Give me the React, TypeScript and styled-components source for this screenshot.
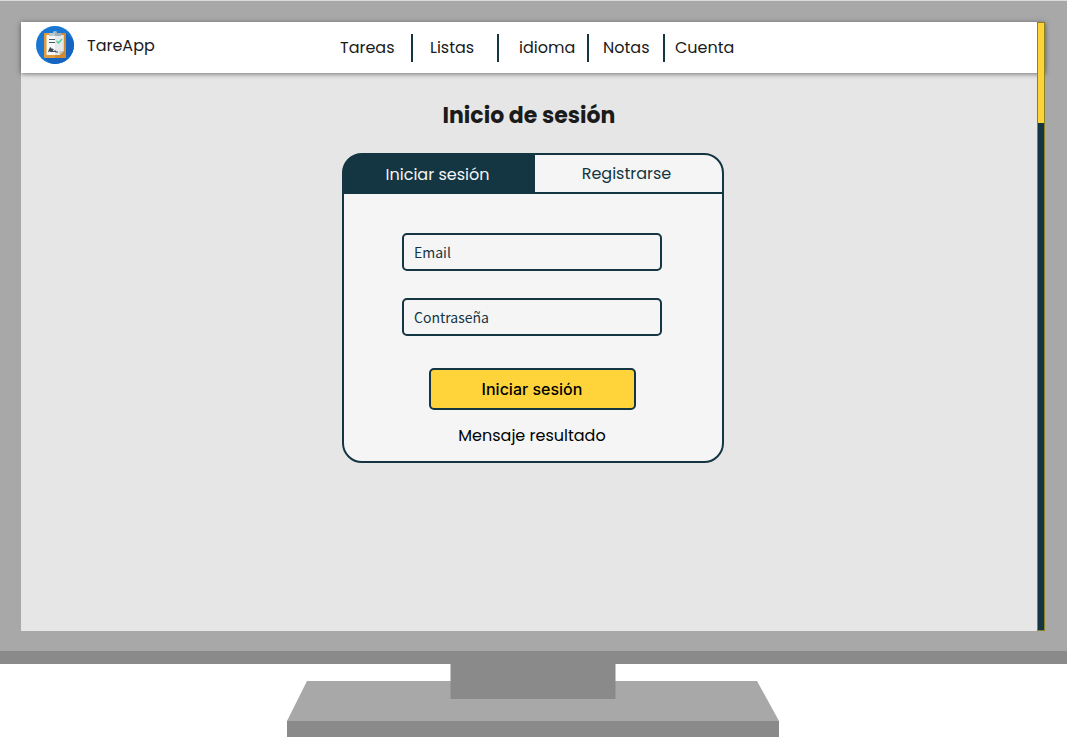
import React from 'react';
import styled, { createGlobalStyle } from 'styled-components';

const navy = '#143642';
const yellow = '#ffd43b';

const GlobalStyle = createGlobalStyle`
  *, *::before, *::after { box-sizing: border-box; }
  body {
    margin: 0;
    background: #fff;
    color: #1b1b1b;
    font-family: Poppins, Inter, sans-serif;
    font-size: 16px;
    line-height: 24px;
  }
  button, input { font: inherit; }
`;

const Page = styled.div`
  display: flex;
  flex-direction: column;
  min-height: 100vh;
`;

const Monitor = styled.div`
  display: flex;
  flex: 1;
  padding: 21px 22px 20px 21px;
  background: #a8a8a8;
  border-top: 1px solid #dcdcdc;
  border-bottom: 13px solid #8a8a8a;
`;

const Screen = styled.div`
  position: relative;
  display: flex;
  flex: 1;
  flex-direction: column;
  min-width: 0;
  background: #e6e6e6;
`;

const Header = styled.header`
  display: grid;
  grid-template-columns: 1fr auto 1fr;
  align-items: center;
  height: 51px;
  padding: 0 15px;
  background: #fff;
  box-shadow: 0 1px 5px rgba(0, 0, 0, 0.5);
`;

const Brand = styled.a`
  display: flex;
  align-items: center;
  gap: 13px;
  padding-bottom: 5px;
  color: inherit;
  text-decoration: none;
`;

const BrandName = styled.span`
  padding-top: 2px;
`;

const Nav = styled.nav`
  display: flex;
`;

const NavLink = styled.a<{ $width: number; $inset: number }>`
  width: ${({ $width }) => $width}px;
  padding: 2px 0 2px ${({ $inset }) => $inset}px;
  color: inherit;
  text-decoration: none;

  & + & {
    border-left: 2px solid ${navy};
  }
`;

const Scrollbar = styled.div`
  position: absolute;
  top: 0;
  right: 0;
  bottom: 0;
  width: 8px;
  background: ${navy};
  border: 1px solid #8c7f24;
`;

const Thumb = styled.div`
  height: 100px;
  background: ${yellow};
`;

const Main = styled.main`
  display: flex;
  flex-direction: column;
  align-items: center;
  padding: 27px 0 24px;
`;

const Title = styled.h1`
  margin: 0 0 21px;
  padding-right: 8px;
  font-size: 22px;
  font-weight: 700;
  line-height: 32px;
`;

const Card = styled.section`
  width: 382px;
  max-width: 100%;
  background: #f5f5f5;
  border: 2px solid ${navy};
  border-radius: 20px;
`;

const Tabs = styled.div`
  display: flex;
  border-bottom: 2px solid ${navy};
`;

const Tab = styled.button<{ $active?: boolean }>`
  flex: ${({ $active }) => ($active ? '0 0 191px' : '1')};
  height: 37px;
  padding: ${({ $active }) => ($active ? '2px 4px 0 0' : '0 4px 0 0')};
  border: 0;
  border-radius: ${({ $active }) => ($active ? '18px 0 0 0' : '0 18px 0 0')};
  background: ${({ $active }) => ($active ? navy : 'transparent')};
  box-shadow: ${({ $active }) => ($active ? `-1px -1px 0 ${navy}` : 'none')};
  color: ${({ $active }) => ($active ? '#f5f5f5' : navy)};
`;

const Form = styled.form`
  display: flex;
  flex-direction: column;
  align-items: center;
  padding: 39px 60px 13px 58px;
`;

const Field = styled.input`
  width: 100%;
  height: 38px;
  margin-bottom: 27px;
  padding: 0 10px;
  background: transparent;
  border: 2px solid ${navy};
  border-radius: 5px;
  color: ${navy};
  font-family: 'Source Sans Pro', 'Noto Sans CJK JP', sans-serif;
  font-size: 14px;

  &::placeholder {
    color: ${navy};
    opacity: 1;
  }
`;

const Submit = styled.button`
  width: 207px;
  height: 42px;
  margin: 5px 0 14px;
  padding: 0;
  background: ${yellow};
  border: 2px solid ${navy};
  border-radius: 5px;
  color: #000;
  font-family: Inter, sans-serif;
  font-weight: 500;
`;

const Message = styled.p`
  margin: 0;
  color: #000;
`;

const Foot = styled.div`
  display: flex;
  justify-content: center;
  padding-right: 2px;
`;

const StandDrawing = styled.svg`
  display: block;
  width: 492px;
  max-width: 100%;
`;

const Logo = () => (
  <svg width="38" height="38" viewBox="0 0 38 38" aria-hidden="true">
    <defs>
      <clipPath id="disc"><circle cx="19" cy="19" r="19" /></clipPath>
    </defs>
    <circle cx="19" cy="19" r="19" fill="#1976d2" />
    <path d="M30 7 42 19V40H16L8 31Z" fill="#1565c0" clipPath="url(#disc)" />
    <rect x="8" y="7" width="22" height="25" rx="1" fill="#e09c3c" />
    <path d="M19 7h10a1 1 0 0 1 1 1v23a1 1 0 0 1-1 1H19z" fill="#cf8a32" />
    <path d="M10.500 9h17v16l-4 4h-13z" fill="#f6f7f8" />
    <path d="M19 9h8.500v16l-4 4H19z" fill="#e6e8ea" />
    <path d="M23.500 29v-4h4z" fill="#c3c8cb" />
    <path d="M13 10V8q0-1 1-1h3q0-2 2-2t2 2h3q1 0 1 1v2z" fill="#bcc8d0" />
    <path d="M19 5q2 0 2 2h3q1 0 1 1v2h-6z" fill="#9caeb8" />
    <path d="M13 13.500h6M13 16.500h6" stroke="#455a64" strokeWidth="1" />
    <path d="m20.500 15 2 2 3.500-4" fill="none" stroke="#45d690" strokeWidth="1.500" />
    <path d="m12.500 26 2-4.500v3.500q1-3 2.500-1.500L15 25.500h3l1-.5 1 1h2" fill="none" stroke="#37474f" strokeWidth="1.200" />
  </svg>
);

const Stand = () => (
  <Foot>
    <StandDrawing viewBox="0 0 492 73" aria-hidden="true">
      <path d="M20 17H470L492 57H0z" fill="#a8a8a8" />
      <path d="M0 57h492v16H0z" fill="#8a8a8a" />
      <path d="M163.500 0h165v35h-165z" fill="#8a8a8a" />
    </StandDrawing>
  </Foot>
);

const links = [
  { label: 'Tareas', width: 88, inset: 17 },
  { label: 'Listas', width: 86, inset: 17 },
  { label: 'idioma', width: 90, inset: 20 },
  { label: 'Notas', width: 76, inset: 14 },
  { label: 'Cuenta', width: 80, inset: 10 },
];

export default function App() {
  return (
    <Page>
      <GlobalStyle />
      <Monitor>
        <Screen>
          <Header>
            <Brand href="#">
              <Logo />
              <BrandName>TareApp</BrandName>
            </Brand>
            <Nav>
              {links.map(({ label, width, inset }) => (
                <NavLink key={label} href="#" $width={width} $inset={inset}>{label}</NavLink>
              ))}
            </Nav>
          </Header>
          <Main>
            <Title>Inicio de sesión</Title>
            <Card>
              <Tabs role="tablist">
                <Tab role="tab" aria-selected="true" $active>Iniciar sesión</Tab>
                <Tab role="tab" aria-selected="false">Registrarse</Tab>
              </Tabs>
              <Form onSubmit={(event) => event.preventDefault()}>
                <Field type="email" aria-label="Email" placeholder="Email" />
                <Field type="password" aria-label="Contraseña" placeholder="Contraseña" />
                <Submit type="submit">Iniciar sesión</Submit>
                <Message>Mensaje resultado</Message>
              </Form>
            </Card>
          </Main>
          <Scrollbar>
            <Thumb />
          </Scrollbar>
        </Screen>
      </Monitor>
      <Stand />
    </Page>
  );
}
